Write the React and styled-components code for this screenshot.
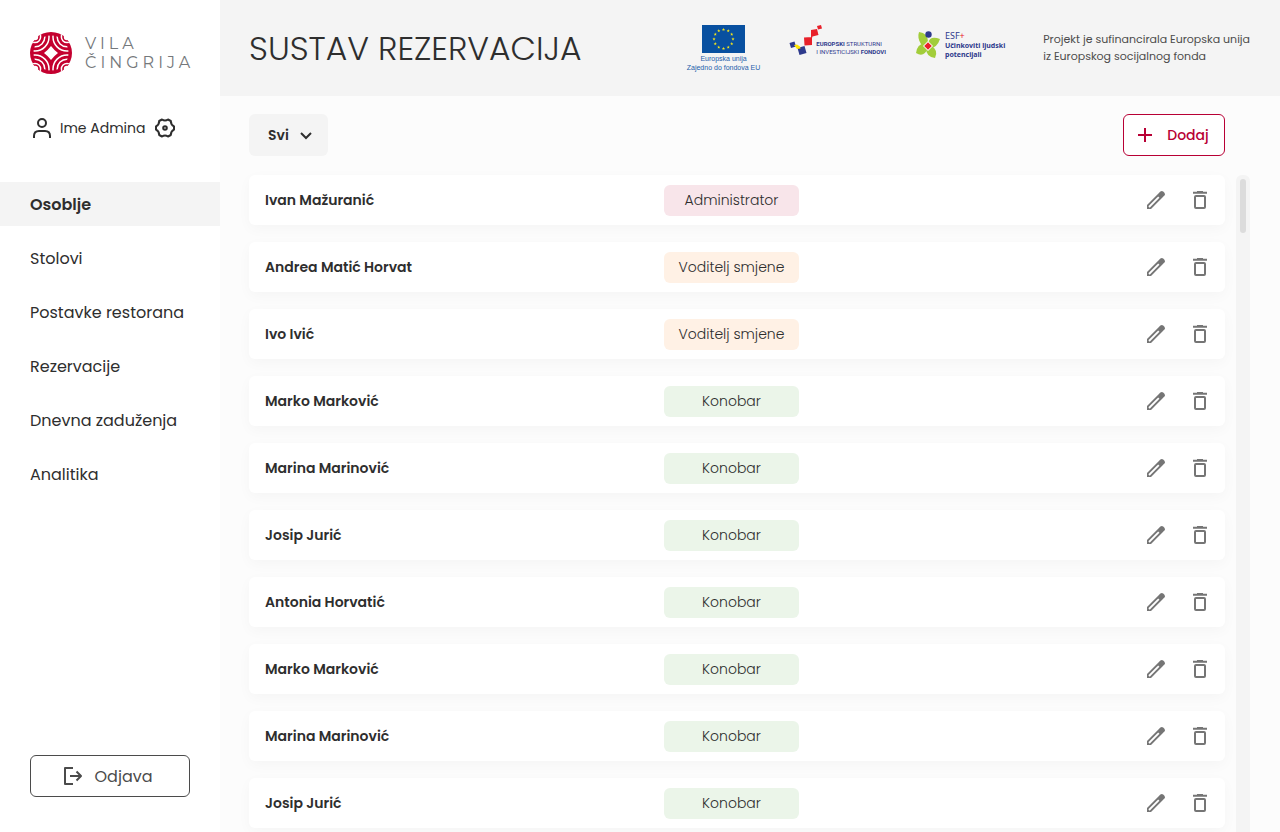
import React from 'react';
import styled, { createGlobalStyle } from 'styled-components';

const GlobalStyle = createGlobalStyle`
  *, *::before, *::after { box-sizing: border-box; }
  body { margin: 0; background: #fcfcfc; color: #2e2e2e; font-family: Poppins, Inter, "Open Sans", sans-serif; font-size: 14px; }
  button, select { font: inherit; color: inherit; cursor: pointer; }
`;

const Page = styled.div`
  display: flex;
  height: 100vh;
`;

const Sidebar = styled.aside`
  display: flex;
  flex-direction: column;
  flex: 0 0 220px;
  padding: 32px 0 35px;
  background: #fff;
`;

const Brand = styled.a`
  display: flex;
  align-items: center;
  gap: 13px;
  height: 42px;
  padding-left: 30px;
  text-decoration: none;
`;

const BrandName = styled.span`
  font-family: Montserrat, Lato, sans-serif;
  font-size: 16px;
  line-height: 19px;
  letter-spacing: 4px;
  color: #75787b;
`;

const Account = styled.div`
  display: flex;
  align-items: center;
  height: 24px;
  margin: 42px 0 42px;
  padding-left: 30px;
`;

const AccountName = styled.span`
  margin: 0 8px 0 6px;
`;

const IconButton = styled.button`
  display: grid;
  place-items: center;
  width: 24px;
  height: 24px;
  padding: 0;
  border: 0;
  background: none;
  color: ${(p) => p.$color || '#2e2e2e'};
`;

const Nav = styled.nav`
  display: flex;
  flex-direction: column;
  gap: 10px;
`;

const NavLink = styled.a`
  padding: 2px 30px 0;
  font-size: 16px;
  line-height: 42px;
  font-weight: ${(p) => (p.$active ? 600 : 400)};
  color: #2e2e2e;
  text-decoration: none;
  background: ${(p) => (p.$active ? '#f4f4f4' : 'transparent')};
`;

const Logout = styled.button`
  display: flex;
  align-items: center;
  justify-content: center;
  gap: 11px;
  height: 42px;
  margin: auto 30px 0;
  padding: 0 8px 0 0;
  border: 1px solid #4b4b4b;
  border-radius: 6px;
  background: #fff;
  color: #4b4b4b;
  font-size: 16px;
`;

const Main = styled.div`
  display: flex;
  flex-direction: column;
  flex: 1;
  min-width: 0;
`;

const Header = styled.header`
  display: flex;
  align-items: center;
  justify-content: space-between;
  flex: 0 0 96px;
  padding: 0 30px 0 29px;
  background: #f4f4f4;
`;

const Title = styled.h1`
  margin: 0;
  padding-top: 2px;
  font-size: 33px;
  line-height: 48px;
  font-weight: 300;
  white-space: nowrap;
`;

const Funding = styled.div`
  display: flex;
  align-items: center;
`;

const EuLogo = styled.div`
  display: flex;
  flex-direction: column;
  align-items: center;
  margin-right: 29px;
  font-family: "Liberation Sans", Arial, sans-serif;
  font-size: 7px;
  line-height: 9px;
  color: #1c5dab;
  text-align: center;
  white-space: nowrap;
  svg { margin-bottom: 1px; }
`;

const LogoGroup = styled.div`
  display: flex;
  align-items: center;
  gap: ${(p) => p.$gap}px;
  margin-right: ${(p) => p.$after}px;
  padding-bottom: ${(p) => p.$lift}px;
  svg { overflow: visible; }
`;

const LogoText = styled.div`
  padding-top: ${(p) => p.$top || 0}px;
  font-family: ${(p) => p.$family || '"Noto Sans"'}, sans-serif;
  font-size: ${(p) => p.$size}px;
  line-height: ${(p) => p.$line}px;
  color: #2e3a8c;
  white-space: nowrap;
`;

const Fund = styled.span`
  font-size: 9px;
`;

const Plus = styled.span`
  color: #e8202a;
`;

const FundingNote = styled.p`
  margin: 0;
  font-size: 11px;
  line-height: 17px;
  color: #4b4b4b;
  white-space: nowrap;
`;

const Content = styled.main`
  display: flex;
  flex-direction: column;
  flex: 1;
  min-height: 0;
  padding: 18px 30px 0 29px;
`;

const Toolbar = styled.div`
  display: flex;
  justify-content: space-between;
  padding-right: 25px;
  margin-bottom: 19px;
`;

const Filter = styled.label`
  display: grid;
  align-items: center;
  width: 79px;
  height: 42px;
  border-radius: 6px;
  background: #f4f4f4;
  > * { grid-area: 1 / 1; }
  svg { justify-self: end; margin-right: 14px; pointer-events: none; }
`;

const FilterSelect = styled.select`
  appearance: none;
  width: 100%;
  height: 100%;
  padding: 0 30px 0 19px;
  border: 0;
  border-radius: 6px;
  background: transparent;
  font-size: 14px;
  font-weight: 600;
`;

const AddButton = styled.button`
  display: flex;
  align-items: center;
  justify-content: center;
  gap: 14px;
  width: 102px;
  height: 42px;
  padding: 0 2px 0 0;
  border: 1px solid #b80035;
  border-radius: 6px;
  background: #fff;
  color: #b80035;
  font-size: 14px;
  font-weight: 500;
`;

const ListArea = styled.div`
  display: flex;
  flex: 1;
  gap: 11px;
  min-height: 0;
`;

const List = styled.ul`
  display: flex;
  flex-direction: column;
  flex: 1;
  gap: 17px;
  min-width: 0;
  margin: 0;
  padding: 0;
  list-style: none;
  overflow: clip;
  overflow-clip-margin: 30px;
`;

const Row = styled.li`
  display: grid;
  grid-template-columns: 399px 1fr auto;
  align-items: center;
  flex: 0 0 50px;
  padding: 0 13px 0 16px;
  border-radius: 6px;
  background: #fff;
  box-shadow: 0 4px 14px rgba(0, 0, 0, 0.03);
`;

const Name = styled.span`
  font-size: 14px;
  font-weight: 600;
`;

const tones = { Administrator: '#f8e5ea', 'Voditelj smjene': '#fff1e5', Konobar: '#ebf5e9' };

const Role = styled.span`
  width: 135px;
  border-radius: 6px;
  background: ${(p) => tones[p.$role]};
  font-size: 14px;
  line-height: 31px;
  font-weight: 300;
  text-align: center;
`;

const Actions = styled.div`
  display: flex;
  gap: 20px;
`;

const Track = styled.div`
  width: 14px;
  padding: 4px;
  border-radius: 6px 6px 0 0;
  background: #f4f4f4;
`;

const Thumb = styled.div`
  height: 54px;
  width: 6px;
  border-radius: 3px;
  background: #dcdcdc;
`;

const Icon = ({ children, size = 24 }) => (
  <svg width={size} height={size} viewBox={`0 0 ${size} ${size}`} fill="none" stroke="currentColor" strokeWidth="2" aria-hidden="true">
    {children}
  </svg>
);

const corners = [[-16, -16], [16, -16], [-16, 16], [16, 16]];

const VilaMark = () => (
  <svg width="42" height="42" viewBox="-21 -21 42 42" aria-hidden="true">
    <defs>
      <clipPath id="rosette"><circle r="21" /></clipPath>
      <clipPath id="rosetteCore"><circle r="17.5" /></clipPath>
    </defs>
    <circle r="21" fill="#c4002f" />
    <g clipPath="url(#rosetteCore)" fill="none" stroke="#fff" strokeWidth="1.5">
      {corners.map(([x, y]) => (
        <g key={`${x} ${y}`}>
          <circle cx={x} cy={y} r="14" />
          <circle cx={x} cy={y} r="9.8" />
        </g>
      ))}
    </g>
    <g clipPath="url(#rosette)">
      {corners.map(([x, y]) => (
        <circle key={`${x} ${y}`} cx={x} cy={y} r="5.600" fill="#c4002f" stroke="#fff" strokeWidth="1.500" />
      ))}
    </g>
    <g fill="#fff">
      {corners.map(([x, y]) => (
        <circle key={`${x} ${y}`} cx={x} cy={y} r="3.200" />
      ))}
    </g>
    <path d="M0-7Q3-3 7 0Q3 3 0 7Q-3 3-7 0Q-3-3 0-7Z" fill="#fff" />
  </svg>
);

const starPoints = Array.from({ length: 10 }, (_, i) => {
  const a = (i * Math.PI) / 5;
  const r = i % 2 ? 0.7 : 1.7;
  return `${Math.sin(a) * r},${-Math.cos(a) * r}`;
}).join(' ');

const EuFlag = () => (
  <svg width="43" height="28" viewBox="0 0 43 28" aria-hidden="true">
    <rect width="43" height="28" fill="#0850a0" />
    {Array.from({ length: 12 }, (_, i) => (
      <polygon
        key={i}
        points={starPoints}
        fill="#f5e51b"
        transform={`translate(${21.5 + Math.sin((i * Math.PI) / 6) * 9.5} ${14 - Math.cos((i * Math.PI) / 6) * 9.5})`}
      />
    ))}
  </svg>
);

const FundsMark = () => (
  <svg width="27" height="31" viewBox="0 0 27 31" aria-hidden="true">
    <path d="M0.500 18L5.500 16.500L7 21.500L2 23Z M8.500 23L15.500 21L17.500 28L10.500 30Z" fill="#2e3a8c" />
    <path d="M5 20L8 19.500L11 21.500L11.500 23.500L8 24Z" fill="#ffe600" />
    <path d="M15 12.500L23 12V20L15.500 20.500Z M22 5L28 4L29.500 10L23.500 11.500L23 13L22 12Z M28 1L32 0L33 3.500L29 4.500Z" fill="#e8202a" />
  </svg>
);

const EsfMark = () => (
  <svg width="24" height="28" viewBox="0 0 24 28" aria-hidden="true">
    <g fill="#a2cd3a">
      <path d="M12 13L5 13Q1 7 3 1Q12 2 12 11Z" />
      <path d="M12 12Q14 4 24 8Q21 17 14 17Z" />
      <path d="M14 14Q23 19 19 27Q10 26 10 17Z" />
      <path d="M12 17Q8 27 0 22Q1 13 9 12Z" />
    </g>
    <circle cx="12.500" cy="3.500" r="3.200" fill="#2e3a8c" />
    <path d="M12 10L17 15L12 20L7 15Z" fill="#fff" />
    <path d="M12 11.200L15.800 15L12 18.800L8.200 15Z" fill="#e8202a" />
  </svg>
);

const navItems = ['Osoblje', 'Stolovi', 'Postavke restorana', 'Rezervacije', 'Dnevna zaduženja', 'Analitika'];

const staff = [
  ['Ivan Mažuranić', 'Administrator'],
  ['Andrea Matić Horvat', 'Voditelj smjene'],
  ['Ivo Ivić', 'Voditelj smjene'],
  ['Marko Marković', 'Konobar'],
  ['Marina Marinović', 'Konobar'],
  ['Josip Jurić', 'Konobar'],
  ['Antonia Horvatić', 'Konobar'],
  ['Marko Marković', 'Konobar'],
  ['Marina Marinović', 'Konobar'],
  ['Josip Jurić', 'Konobar'],
];

export default function App() {
  return (
    <Page>
      <GlobalStyle />
      <Sidebar>
        <Brand href="#">
          <VilaMark />
          <BrandName>VILA<br />ČINGRIJA</BrandName>
        </Brand>
        <Account>
          <Icon>
            <circle cx="12" cy="7" r="4" />
            <path d="M4 22V20Q4 15 9 15H15Q20 15 20 20V22" />
          </Icon>
          <AccountName>Ime Admina</AccountName>
          <IconButton aria-label="Postavke računa">
            <Icon>
              <path strokeLinejoin="round" d="M9 3.500Q12 5.500 15 3.500L17.800 5Q17.800 8.800 21 10.300V13.700Q17.800 15.200 17.800 19L15 20.500Q12 18.500 9 20.500L6.200 19Q6.200 15.200 3 13.700V10.300Q6.200 8.800 6.200 5Z" />
              <circle cx="12" cy="12" r="1.800" />
            </Icon>
          </IconButton>
        </Account>
        <Nav>
          {navItems.map((item, i) => (
            <NavLink key={item} href="#" $active={i === 0} aria-current={i === 0 ? 'page' : undefined}>{item}</NavLink>
          ))}
        </Nav>
        <Logout>
          <Icon>
            <path strokeLinejoin="round" d="M13 4H5V20H13M10 12H21M16.500 7.500L21 12L16.500 16.500" />
          </Icon>
          Odjava
        </Logout>
      </Sidebar>
      <Main>
        <Header>
          <Title>SUSTAV REZERVACIJA</Title>
          <Funding>
            <EuLogo>
              <EuFlag />
              <span>Europska unija</span>
              <span>Zajedno do fondova EU</span>
            </EuLogo>
            <LogoGroup $gap={0} $after={30} $lift={16}>
              <FundsMark />
              <LogoText $family={'"Liberation Sans Narrow", Roboto'} $size={6} $line={8} $top={15}><b>EUROPSKI</b> STRUKTURNI<br />I INVESTICIJSKI <b>FONDOVI</b></LogoText>
            </LogoGroup>
            <LogoGroup $gap={5} $after={38} $lift={6}>
              <EsfMark />
              <LogoText $size={7} $line={9}><Fund>ESF<Plus>+</Plus></Fund><br /><b>Učinkoviti ljudski<br />potencijali</b></LogoText>
            </LogoGroup>
            <FundingNote>Projekt je sufinancirala Europska unija<br />iz Europskog socijalnog fonda</FundingNote>
          </Funding>
        </Header>
        <Content>
          <Toolbar>
            <Filter>
              <FilterSelect aria-label="Uloga" defaultValue="Svi">
                <option>Svi</option>
              </FilterSelect>
              <Icon size={16}><path d="M3 6L8 11L13 6" /></Icon>
            </Filter>
            <AddButton>
              <Icon size={16}><path d="M8 1V15M1 8H15" /></Icon>
              Dodaj
            </AddButton>
          </Toolbar>
          <ListArea>
            <List>
              {staff.map(([name, role], i) => (
                <Row key={i}>
                  <Name>{name}</Name>
                  <Role $role={role}>{role}</Role>
                  <Actions>
                    <IconButton $color="#757575" aria-label={`Uredi: ${name}`}>
                      <Icon>
                        <path fill="currentColor" stroke="none" d="M3 17V21H7L20.400 7.600A2 2 0 0 0 20.400 4.800L19.200 3.600A2 2 0 0 0 16.400 3.600Z" />
                        <path stroke="#fff" strokeWidth="1.800" d="M5 19L14.800 9.200" />
                      </Icon>
                    </IconButton>
                    <IconButton $color="#757575" aria-label={`Obriši: ${name}`}>
                      <Icon>
                        <path d="M5 4.800H19M9 4H15" />
                        <rect x="7" y="8" width="10" height="12" rx="1" />
                      </Icon>
                    </IconButton>
                  </Actions>
                </Row>
              ))}
            </List>
            <Track><Thumb /></Track>
          </ListArea>
        </Content>
      </Main>
    </Page>
  );
}
